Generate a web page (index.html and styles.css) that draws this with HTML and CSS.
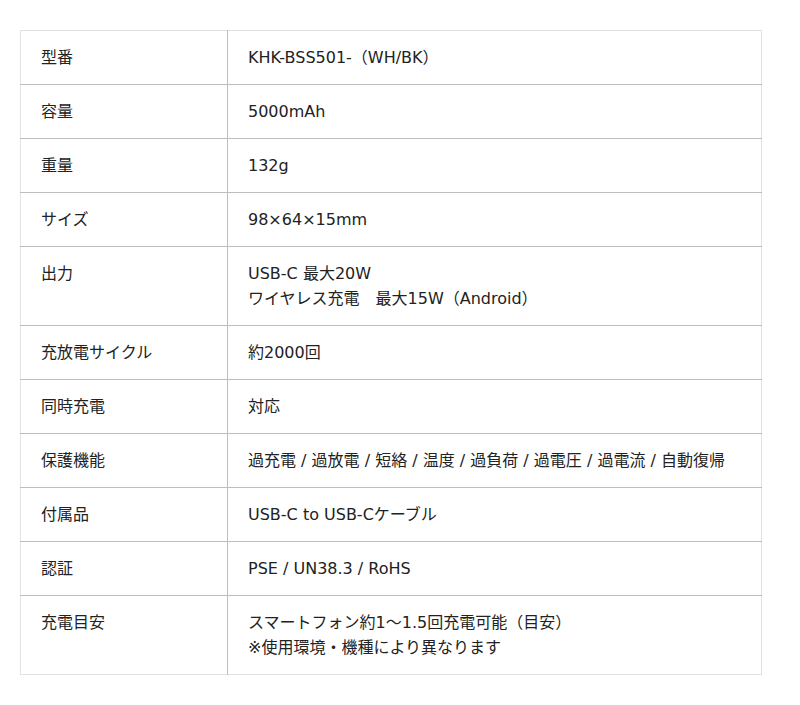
FILE: index.html
```html
<!DOCTYPE html>
<html lang="ja">
<head>
<meta charset="utf-8">
<link rel="stylesheet" href="styles.css">
</head>
<body>
<table class="spec">
<tbody>
<tr><th>型番</th><td>KHK-BSS501-（WH/BK）</td></tr>
<tr><th>容量</th><td>5000mAh</td></tr>
<tr><th>重量</th><td>132g</td></tr>
<tr><th>サイズ</th><td>98×64×15mm</td></tr>
<tr><th>出力</th><td>USB-C 最大20W<br>ワイヤレス充電　最大15W（Android）</td></tr>
<tr><th>充放電サイクル</th><td>約2000回</td></tr>
<tr><th>同時充電</th><td>対応</td></tr>
<tr><th>保護機能</th><td>過充電 / 過放電 / 短絡 / 温度 / 過負荷 / 過電圧 / 過電流 / 自動復帰</td></tr>
<tr><th>付属品</th><td>USB-C to USB-Cケーブル</td></tr>
<tr><th>認証</th><td>PSE / UN38.3 / RoHS</td></tr>
<tr><th>充電目安</th><td>スマートフォン約1〜1.5回充電可能（目安）<br>※使用環境・機種により異なります</td></tr>
</tbody>
</table>
</body>
</html>
```
FILE: styles.css
```css
html, body {
  margin: 0;
  background: #fff;
}
body {
  padding: 30px 20px 0 20px;
  font-family: "DejaVu Sans", "Noto Sans CJK JP", sans-serif;
  font-size: 16px;
  line-height: 25px;
  color: #222;
}
.spec {
  width: 742px;
  border-collapse: collapse;
  border: 1px solid #e2e2e2;
}
.spec th, .spec td {
  padding: 14px 20px 14px 20px;
  text-align: left;
  vertical-align: top;
  font-weight: normal;
  border-top: 1px solid #bdbdbd;
}
.spec tr:first-child th, .spec tr:first-child td {
  border-top: 1px solid #e2e2e2;
}
.spec th {
  width: 166px;
  border-right: 1px solid #bdbdbd;
}
```
